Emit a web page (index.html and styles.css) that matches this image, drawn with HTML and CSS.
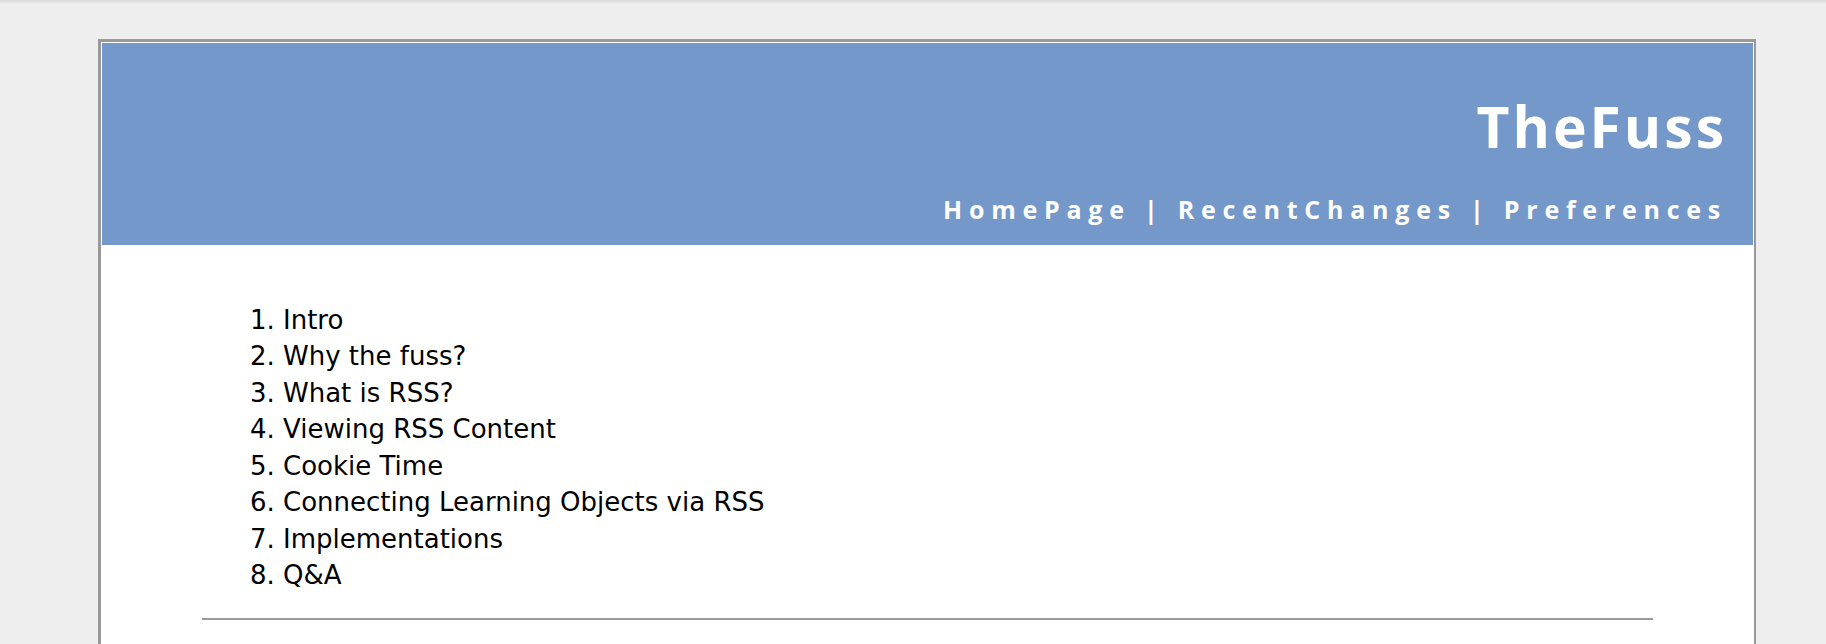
FILE: index.html
```html
<!DOCTYPE html>
<html lang="en">
<head>
<meta charset="utf-8">
<title>TheFuss</title>
<link rel="stylesheet" href="styles.css">
</head>
<body>
<div class="page">
  <div class="header">
    <h1 class="title">TheFuss</h1>
    <div class="nav"><a href="#">HomePage</a> | <a href="#">RecentChanges</a> | <a href="#">Preferences</a></div>
  </div>
  <div class="content">
    <ol class="toc">
      <li>Intro</li>
      <li>Why the fuss?</li>
      <li>What is RSS?</li>
      <li>Viewing RSS Content</li>
      <li>Cookie Time</li>
      <li>Connecting Learning Objects via RSS</li>
      <li>Implementations</li>
      <li>Q&amp;A</li>
    </ol>
    <hr class="rule">
  </div>
</div>
</body>
</html>
```

FILE: styles.css
```css
html {
  background: #eeeeee;
}
body {
  margin: 0;
  min-height: 644px;
  background: linear-gradient(to bottom, #d9d9d9 0, #eeeeee 4px) no-repeat;
  background-size: 100% 4px;
  background-color: #eeeeee;
  overflow: hidden;
}
.page {
  margin: 39px 70px 0 98px;
  border-style: solid;
  border-color: #999999;
  border-width: 3px 2px 3px 3px;
  padding: 1px 1px 0 1px;
  background: #ffffff;
  min-height: 700px;
}
.header {
  background: #7398c9;
  color: #ffffff;
  text-align: right;
  padding: 55px 26px 22px 0;
  height: 202px;
  box-sizing: border-box;
  font-family: "Open Sans", "DejaVu Sans", sans-serif;
}
.title {
  margin: 0;
  font-size: 57px;
  line-height: 57px;
  font-weight: 700;
  letter-spacing: 3px;
}
.nav {
  margin-top: 42px;
  font-size: 25px;
  line-height: 25px;
  font-weight: 700;
  letter-spacing: 6.75px;
}
.nav a {
  color: #ffffff;
  text-decoration: none;
}
.content {
  padding: 0 100px;
}
.toc {
  margin: 57px 0 24px 0;
  padding-left: 81px;
  font-family: "DejaVu Sans", Verdana, sans-serif;
  font-size: 26px;
  line-height: 36.43px;
  color: #000000;
}
.toc li {
  padding-left: 0;
}
.rule {
  margin: 0;
  border: 0;
  border-top: 2px solid #9a9a9a;
  height: 0;
}
```
